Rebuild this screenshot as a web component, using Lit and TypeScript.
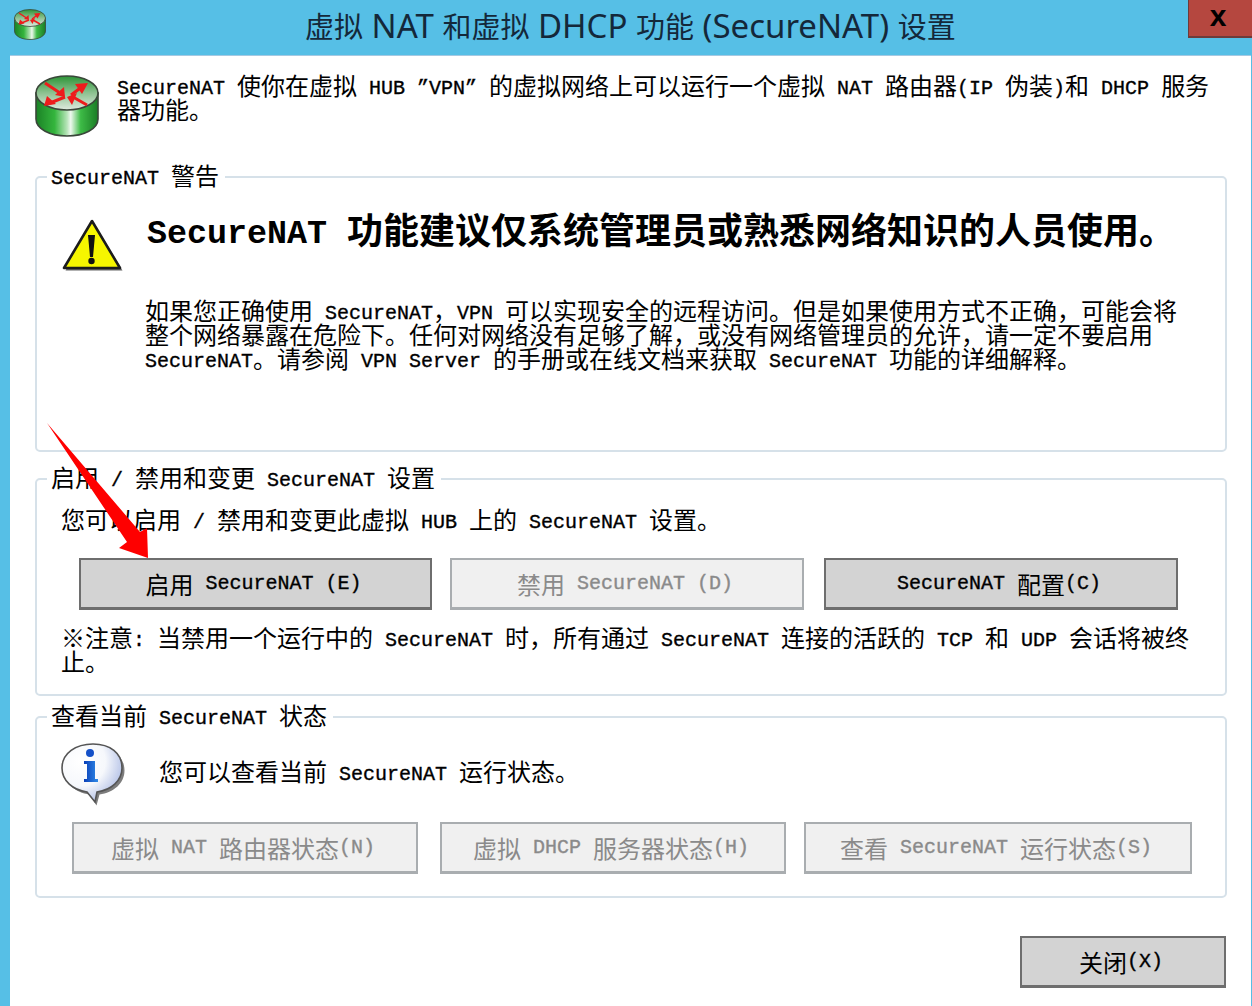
import { LitElement, html, css, svg } from "lit";
import { customElement } from "lit/decorators.js";

const t = (s: string) =>
  s.split("\n").map((line, i) => html`${i ? html`<br />` : ""}${line
    .split(/([\x20-\x7e”]+)/)
    .map((p, k) => (k % 2 ? html`<span class="l">${p}</span>` : p))}`);

const title = (s: string) =>
  s.split(/([\x20-\x7e]+)/).map((p, k) => (k % 2 ? html`<span class="tl">${p}</span>` : p));

const router = (id: string) => svg`
  <defs>
    <linearGradient id="${id}s" x1="0" x2="1" y1="0" y2="0">
      <stop offset="0" stop-color="#1b8226"/><stop offset=".3" stop-color="#34b53d"/>
      <stop offset=".5" stop-color="#b6e4b8"/><stop offset=".56" stop-color="#eef8ee"/>
      <stop offset=".72" stop-color="#3dbb46"/><stop offset="1" stop-color="#1a7c25"/>
    </linearGradient>
    <linearGradient id="${id}t" x1="0" x2="0" y1="0" y2="1">
      <stop offset="0" stop-color="#2c9436"/><stop offset=".5" stop-color="#8dc291"/>
      <stop offset="1" stop-color="#dfeadf"/>
    </linearGradient>
  </defs>
  <path d="M1 18v26c0 10 14 17 31 17s31-7 31-17V18z" fill="url(#${id}s)" stroke="#3a473a" stroke-width="1.6"/>
  <ellipse cx="32" cy="18" rx="31" ry="17" fill="url(#${id}t)" stroke="#3a473a" stroke-width="1.6"/>
  <g stroke="#ee1c1c" stroke-width="3" fill="#ee1c1c">
    <path d="M10 8l15 10M30 22l-15 6M52 30L38 22M36 20l12-9" fill="none"/>
    <g stroke="none">
      <path d="M30 22l-1-10-9 8z"/><path d="M53 8l-13 1 7 10z"/>
      <path d="M9 31l3-10 9 8z"/><path d="M32 22l10-4-5 12z"/>
    </g>
  </g>`;

@customElement("app-root")
export class AppRoot extends LitElement {
  static styles = css`
    :host {
      display: flex;
      flex-direction: column;
      width: 1252px;
      height: 1006px;
      background: #56bfe6;
      color: #000;
      font-family: "Noto Sans CJK SC", "Liberation Mono", monospace;
      font-size: 24px;
      line-height: 24px;
      overflow: hidden;
    }
    .l {
      font-family: "Liberation Mono", monospace;
      font-size: 20px;
      line-height: 0;
      vertical-align: 1px;
      -webkit-text-stroke: 0.35px currentColor;
      white-space: pre;
    }
    .titlebar {
      height: 55px;
      display: flex;
      align-items: flex-start;
      flex: none;
    }
    .appicon {
      width: 32px;
      height: 32px;
      margin: 9px 0 0 14px;
      flex: none;
    }
    .title {
      flex: 1;
      margin: 6px 0 0 259px;
      font-family: "Noto Sans CJK SC", sans-serif;
      font-size: 29px;
      line-height: 38px;
      color: #14283a;
      white-space: pre;
    }
    .tl {
      font-family: "Noto Sans", sans-serif;
      font-size: 33px;
      line-height: 0;
    }
    .close {
      box-sizing: border-box;
      width: 64px;
      height: 38px;
      flex: none;
      background: #b5473f;
      border-left: 1px solid #6d3b3a;
      border-bottom: 2px solid #6d3b3a;
      display: flex;
      align-items: center;
      justify-content: center;
      font-family: "Liberation Sans", sans-serif;
      font-weight: 700;
      font-size: 30px;
      line-height: 32px;
      padding: 0 5px 4px 0;
    }
    .client {
      flex: 1;
      margin: 0 1px 0 10px;
      background: #fff;
      border-top: 1px solid #a5c9e2;
      display: flex;
      flex-direction: column;
      padding: 19px 0 0 25px;
    }
    .head {
      display: flex;
      height: 101px;
      flex: none;
    }
    .head svg {
      width: 64px;
      height: 63px;
      flex: none;
      filter: blur(0.4px);
    }
    .head div {
      margin: -2px 0 0 18px;
      white-space: nowrap;
    }
    .group {
      box-sizing: border-box;
      width: 1192px;
      border: 2px solid #d6e1e9;
      border-radius: 5px;
      flex: none;
    }
    .legend {
      display: table;
      margin: -15px 0 0 10px;
      padding: 0 6px 0 4px;
      background: #fff;
      white-space: nowrap;
    }
    .g1 { height: 276px; }
    .g2 { height: 218px; margin-top: 26px; }
    .g3 { height: 182px; margin-top: 20px; }
    .warnrow {
      display: flex;
      margin: 21px 0 0 25px;
    }
    .warnrow svg {
      width: 64px;
      height: 56px;
      flex: none;
      margin-top: 10px;
      filter: blur(0.6px);
    }
    .warntext {
      margin-left: 19px;
      white-space: nowrap;
    }
    .h {
      font-size: 36px;
      line-height: 40px;
      font-weight: 700;
      margin: 0 0 0 2px;
    }
    .h .l {
      font-size: 33.33px;
      -webkit-text-stroke: 0;
    }
    .body { margin-top: 50px; }
    .g2 .intro {
      margin: 18px 0 0 24px;
      white-space: nowrap;
    }
    .row {
      display: flex;
      margin: 27px 0 0 42px;
      gap: 18px;
    }
    button {
      all: unset;
      box-sizing: border-box;
      height: 52px;
      display: flex;
      align-items: center;
      justify-content: center;
      font: inherit;
      white-space: pre;
      background: #d3d3d3;
      border: 2px solid #6e6e6e;
      border-bottom-width: 3px;
      padding-right: 4px;
      flex: none;
    }
    button[disabled] {
      background: #f0f0f0;
      border-color: #a9adb0;
      color: #8a8a8a;
    }
    .row button:nth-child(1) { width: 353px; }
    .row button:nth-child(2) { width: 354px; margin-right: 2px; }
    .row button:nth-child(3) { width: 354px; }
    .note {
      margin: 15px 0 0 24px;
      white-space: nowrap;
    }
    .inforow {
      display: flex;
      align-items: flex-start;
      margin: 14px 0 0 23px;
      height: 70px;
    }
    .inforow svg {
      width: 66px;
      height: 66px;
      flex: none;
      filter: blur(0.5px);
    }
    .inforow div {
      margin: 18px 0 0 33px;
      white-space: nowrap;
    }
    .row3 {
      display: flex;
      margin: 11px 0 0 35px;
    }
    .row3 button:nth-child(1) { width: 346px; }
    .row3 button:nth-child(2) { width: 346px; margin-left: 22px; }
    .row3 button:nth-child(3) { width: 388px; margin-left: 18px; }
    .foot {
      display: flex;
      justify-content: flex-start;
      margin: 38px 0 0 985px;
    }
    .foot button { width: 206px; }
    .arrow {
      position: absolute;
      left: 0;
      top: 0;
      width: 200px;
      height: 600px;
      pointer-events: none;
    }
  `;

  render() {
    return html`
      <div class="titlebar">
        <svg class="appicon" viewBox="0 0 64 64">${router("a")}</svg>
        <div class="title">${title("虚拟 NAT 和虚拟 DHCP 功能 (SecureNAT) 设置")}</div>
        <div class="close">x</div>
      </div>
      <div class="client">
        <div class="head">
          <svg viewBox="0 0 64 63">${router("b")}</svg>
          <div>${t("SecureNAT 使你在虚拟 HUB ”VPN” 的虚拟网络上可以运行一个虚拟 NAT 路由器(IP 伪装)和 DHCP 服务\n器功能。")}</div>
        </div>

        <section class="group g1">
          <div class="legend">${t("SecureNAT 警告")}</div>
          <div class="warnrow">
            <svg viewBox="0 0 64 56">
              <path d="M30 3L2 51h57z" fill="#666" transform="translate(1.5 1.5)"/>
              <path d="M30 3L2 50h56z" fill="#f6f600" stroke="#1c1c1c" stroke-width="2.6" stroke-linejoin="round"/>
              <path d="M26 17h7l-2 22h-3z" fill="#111"/>
              <circle cx="29.5" cy="43" r="3.2" fill="#111"/>
            </svg>
            <div class="warntext">
              <div class="h">${t("SecureNAT 功能建议仅系统管理员或熟悉网络知识的人员使用。")}</div>
              <div class="body">${t("如果您正确使用 SecureNAT，VPN 可以实现安全的远程访问。但是如果使用方式不正确，可能会将\n整个网络暴露在危险下。任何对网络没有足够了解，或没有网络管理员的允许，请一定不要启用\nSecureNAT。请参阅 VPN Server 的手册或在线文档来获取 SecureNAT 功能的详细解释。")}</div>
            </div>
          </div>
        </section>

        <section class="group g2">
          <div class="legend">${t("启用 / 禁用和变更 SecureNAT 设置")}</div>
          <div class="intro">${t("您可以启用 / 禁用和变更此虚拟 HUB 上的 SecureNAT 设置。")}</div>
          <div class="row">
            <button>${t("启用 SecureNAT (E)")}</button>
            <button disabled>${t("禁用 SecureNAT (D)")}</button>
            <button>${t("SecureNAT 配置(C)")}</button>
          </div>
          <div class="note">${t("※注意: 当禁用一个运行中的 SecureNAT 时，所有通过 SecureNAT 连接的活跃的 TCP 和 UDP 会话将被终\n止。")}</div>
        </section>

        <section class="group g3">
          <div class="legend">${t("查看当前 SecureNAT 状态")}</div>
          <div class="inforow">
            <svg viewBox="0 0 66 66">
              <defs>
                <radialGradient id="ib" cx=".3" cy=".3" r=".85">
                  <stop offset="0" stop-color="#fff"/><stop offset=".5" stop-color="#f6f8fc"/>
                  <stop offset="1" stop-color="#9fb0e0"/>
                </radialGradient>
                <linearGradient id="ii" x1="0" x2="1" y1="0" y2="0">
                  <stop offset="0" stop-color="#0a3fb8"/><stop offset="1" stop-color="#2f8ae8"/>
                </linearGradient>
              </defs>
              <path d="M33 4C16 4 3 13 3 28c0 13 11 22 25 24l7 11 3-11c14-2 25-11 25-24C63 13 50 4 33 4z" fill="#444" transform="translate(1.5 1.5)" opacity=".7"/>
              <path d="M33 3C16 3 2 12 2 27c0 13 11 22 25 24l8 10 2-10c14-2 25-11 25-24C62 12 50 3 33 3z" fill="url(#ib)" stroke="#555" stroke-width="1.6"/>
              <circle cx="30" cy="12" r="4" fill="#1450c8"/>
              <path d="M24 20h11v18h3v3H24v-3h3V23h-3z" fill="url(#ii)"/>
            </svg>
            <div>${t("您可以查看当前 SecureNAT 运行状态。")}</div>
          </div>
          <div class="row3">
            <button disabled>${t("虚拟 NAT 路由器状态(N)")}</button>
            <button disabled>${t("虚拟 DHCP 服务器状态(H)")}</button>
            <button disabled>${t("查看 SecureNAT 运行状态(S)")}</button>
          </div>
        </section>

        <div class="foot"><button>${t("关闭(X)")}</button></div>
      </div>
      <svg class="arrow" viewBox="0 0 200 600">
        <path d="M47 423L140 532l7-4 1 30-29-10 8-6z" fill="#fe0000"/>
      </svg>
    `;
  }
}
